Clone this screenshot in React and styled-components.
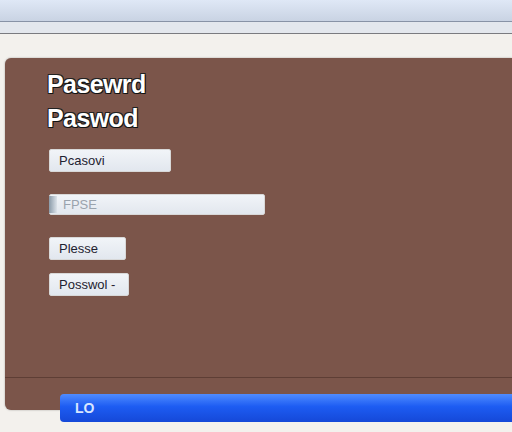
import styled, { createGlobalStyle } from "styled-components";

const Global = createGlobalStyle`
  html, body {
    margin: 0;
    padding: 0;
    background: #f3f1ed;
    font-family: "Liberation Sans", Arial, sans-serif;
  }
`;

const Page = styled.div`
  width: 512px;
  height: 432px;
  overflow: hidden;
  display: flex;
  flex-direction: column;
  background: #f3f1ed;
`;

const TitleBar = styled.div`
  height: 21px;
  background: linear-gradient(#dfe8f6, #c9d3e3);
  border-bottom: 1px solid #8893a6;
`;

const Strip = styled.div`
  height: 11px;
  background: #e3e7ed;
  border-bottom: 1px solid #7a7b80;
`;

const Body = styled.div`
  flex: 1;
  padding: 24px 0 0 5px;
  position: relative;
`;

const Panel = styled.div`
  height: 352px;
  background: #7b554a;
  border-radius: 6px 0 0 6px;
  box-shadow: 0 0 2px rgba(0, 0, 0, 0.35);
  display: flex;
  flex-direction: column;
`;

const Content = styled.div`
  flex: 1;
  padding: 9px 0 0 42px;
  display: flex;
  flex-direction: column;
  border-bottom: 1px solid #5e3e35;
`;

const Heading = styled.h1`
  margin: 0;
  font-size: 25px;
  line-height: 34px;
  font-weight: bold;
  color: #fff;
  letter-spacing: -0.6px;
  text-shadow: 1px 1px 0 #111, -1px -1px 0 #222, 1px -1px 0 #222, -1px 1px 0 #222;
`;

const Field = styled.div`
  margin-top: ${(p) => p.$top}px;
  margin-left: 2px;
  width: ${(p) => p.$w}px;
  height: ${(p) => p.$h || 23}px;
  box-sizing: border-box;
  background: linear-gradient(#f1f4f8, #e2e7ee);
  border: 1px solid #d8d8d8;
  border-radius: 2px;
  display: flex;
  align-items: center;
  padding-left: ${(p) => p.$pad || 9}px;
  font-size: 13px;
  color: ${(p) => (p.$faded ? "#9aa3ad" : "#1e2230")};
  gap: 6px;
`;

const Tick = styled.span`
  width: 8px;
  height: 17px;
  background: linear-gradient(90deg, #8a9aa8, #dde3ea);
  margin-left: -2px;
`;

const Footer = styled.div`
  height: 32px;
`;

const BlueBar = styled.div`
  position: absolute;
  left: 60px;
  right: 0;
  bottom: 10px;
  height: 28px;
  border-radius: 4px 0 0 4px;
  background: linear-gradient(#4f8cff, #1d5cf2 45%, #1548d8);
  display: flex;
  align-items: center;
  padding-left: 15px;
  color: #d8e6ff;
  font-size: 14px;
  font-weight: bold;
`;

export default function App() {
  return (
    <Page>
      <Global />
      <TitleBar />
      <Strip />
      <Body>
        <Panel>
          <Content>
            <Heading>Pasewrd</Heading>
            <Heading>Paswod</Heading>
            <Field $top={14} $w={122}>Pcasovi</Field>
            <Field $top={22} $w={216} $h={21} $pad={1} $faded>
              <Tick />
              FPSE
            </Field>
            <Field $top={22} $w={77}>Plesse</Field>
            <Field $top={13} $w={80}>Posswol -</Field>
          </Content>
          <Footer />
        </Panel>
        <BlueBar>LO</BlueBar>
      </Body>
    </Page>
  );
}
